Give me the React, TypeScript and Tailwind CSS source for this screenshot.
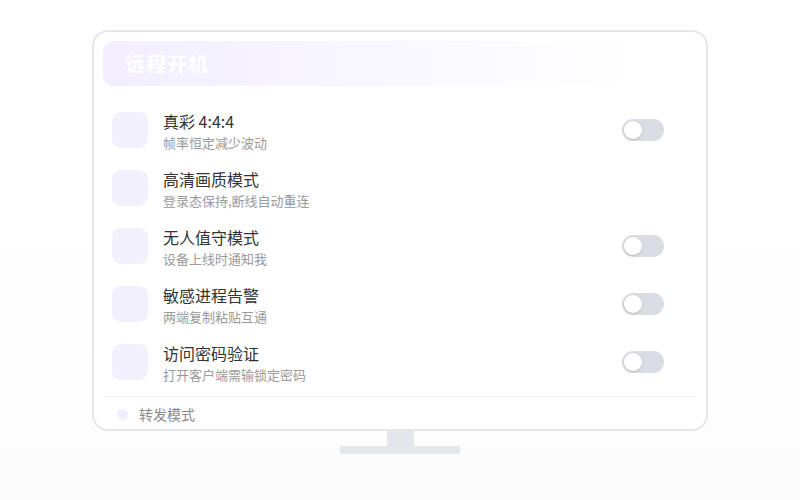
const rows = [
  { title: "真彩 4:4:4", desc: "帧率恒定减少波动", toggle: true },
  { title: "高清画质模式", desc: "登录态保持,断线自动重连", toggle: false },
  { title: "无人值守模式", desc: "设备上线时通知我", toggle: true },
  { title: "敏感进程告警", desc: "两端复制粘贴互通", toggle: true },
  { title: "访问密码验证", desc: "打开客户端需输锁定密码", toggle: true },
];

function Toggle() {
  return (
    <div className="w-[42px] h-[22px] rounded-full bg-[#d9dce2] p-[2px] flex items-center">
      <div className="w-[18px] h-[18px] rounded-full bg-white shadow-sm" />
    </div>
  );
}

export default function App() {
  return (
    <div
      className="w-[800px] h-[500px] bg-gradient-to-b from-white from-40% to-[#fcfcfd] flex flex-col items-center pt-[30px]"
      style={{ fontFamily: '"Noto Sans CJK SC", "Noto Sans", sans-serif' }}
    >
      {/* screen */}
      <div className="w-[616px] h-[401px] rounded-[16px] border-2 border-[#e3e6ea] bg-white p-[9px] flex flex-col">
        <div className="h-[45px] shrink-0 rounded-[10px] bg-gradient-to-r from-[#f2eefe] to-white to-90% flex items-center justify-between pl-[22px] pr-[22px]">
          <span className="text-white text-[20px] font-bold tracking-[1px]">远程开机</span>
          <div className="flex gap-[6px]">
            <div className="w-[9px] h-[9px] rounded-[2px] bg-white" />
            <div className="w-[9px] h-[9px] rounded-[2px] bg-white" />
            <div className="w-[9px] h-[9px] rounded-[2px] bg-white" />
          </div>
        </div>

        <div className="mt-[15px] flex flex-col">
          {rows.map((r) => (
            <div key={r.title} className="h-[58px] flex items-center pl-[9px] pr-[33px]">
              <div className="w-[36px] h-[36px] rounded-[9px] bg-[#f3f0fe] shrink-0" />
              <div className="ml-[15px] mt-[4px] flex-1 flex flex-col">
                <span className="text-[16px] leading-[22px] text-[#333]">{r.title}</span>
                <span className="text-[13px] leading-[22px] text-[#9a9a9a]">{r.desc}</span>
              </div>
              {r.toggle && <Toggle />}
            </div>
          ))}
        </div>

        <div className="mt-[5px] border-t border-[#eef0f3] flex-1 flex items-center pl-[14px] pt-[7px]">
          <div className="w-[11px] h-[11px] rounded-full bg-[#f1effd]" />
          <span className="ml-[11px] text-[14px] text-[#8a8a8a]">转发模式</span>
        </div>
      </div>

      {/* stand */}
      <div className="w-[27px] h-[15px] bg-[#e3e6ea]" />
      <div className="w-[120px] h-[8px] bg-[#e3e6ea]" />
    </div>
  );
}
